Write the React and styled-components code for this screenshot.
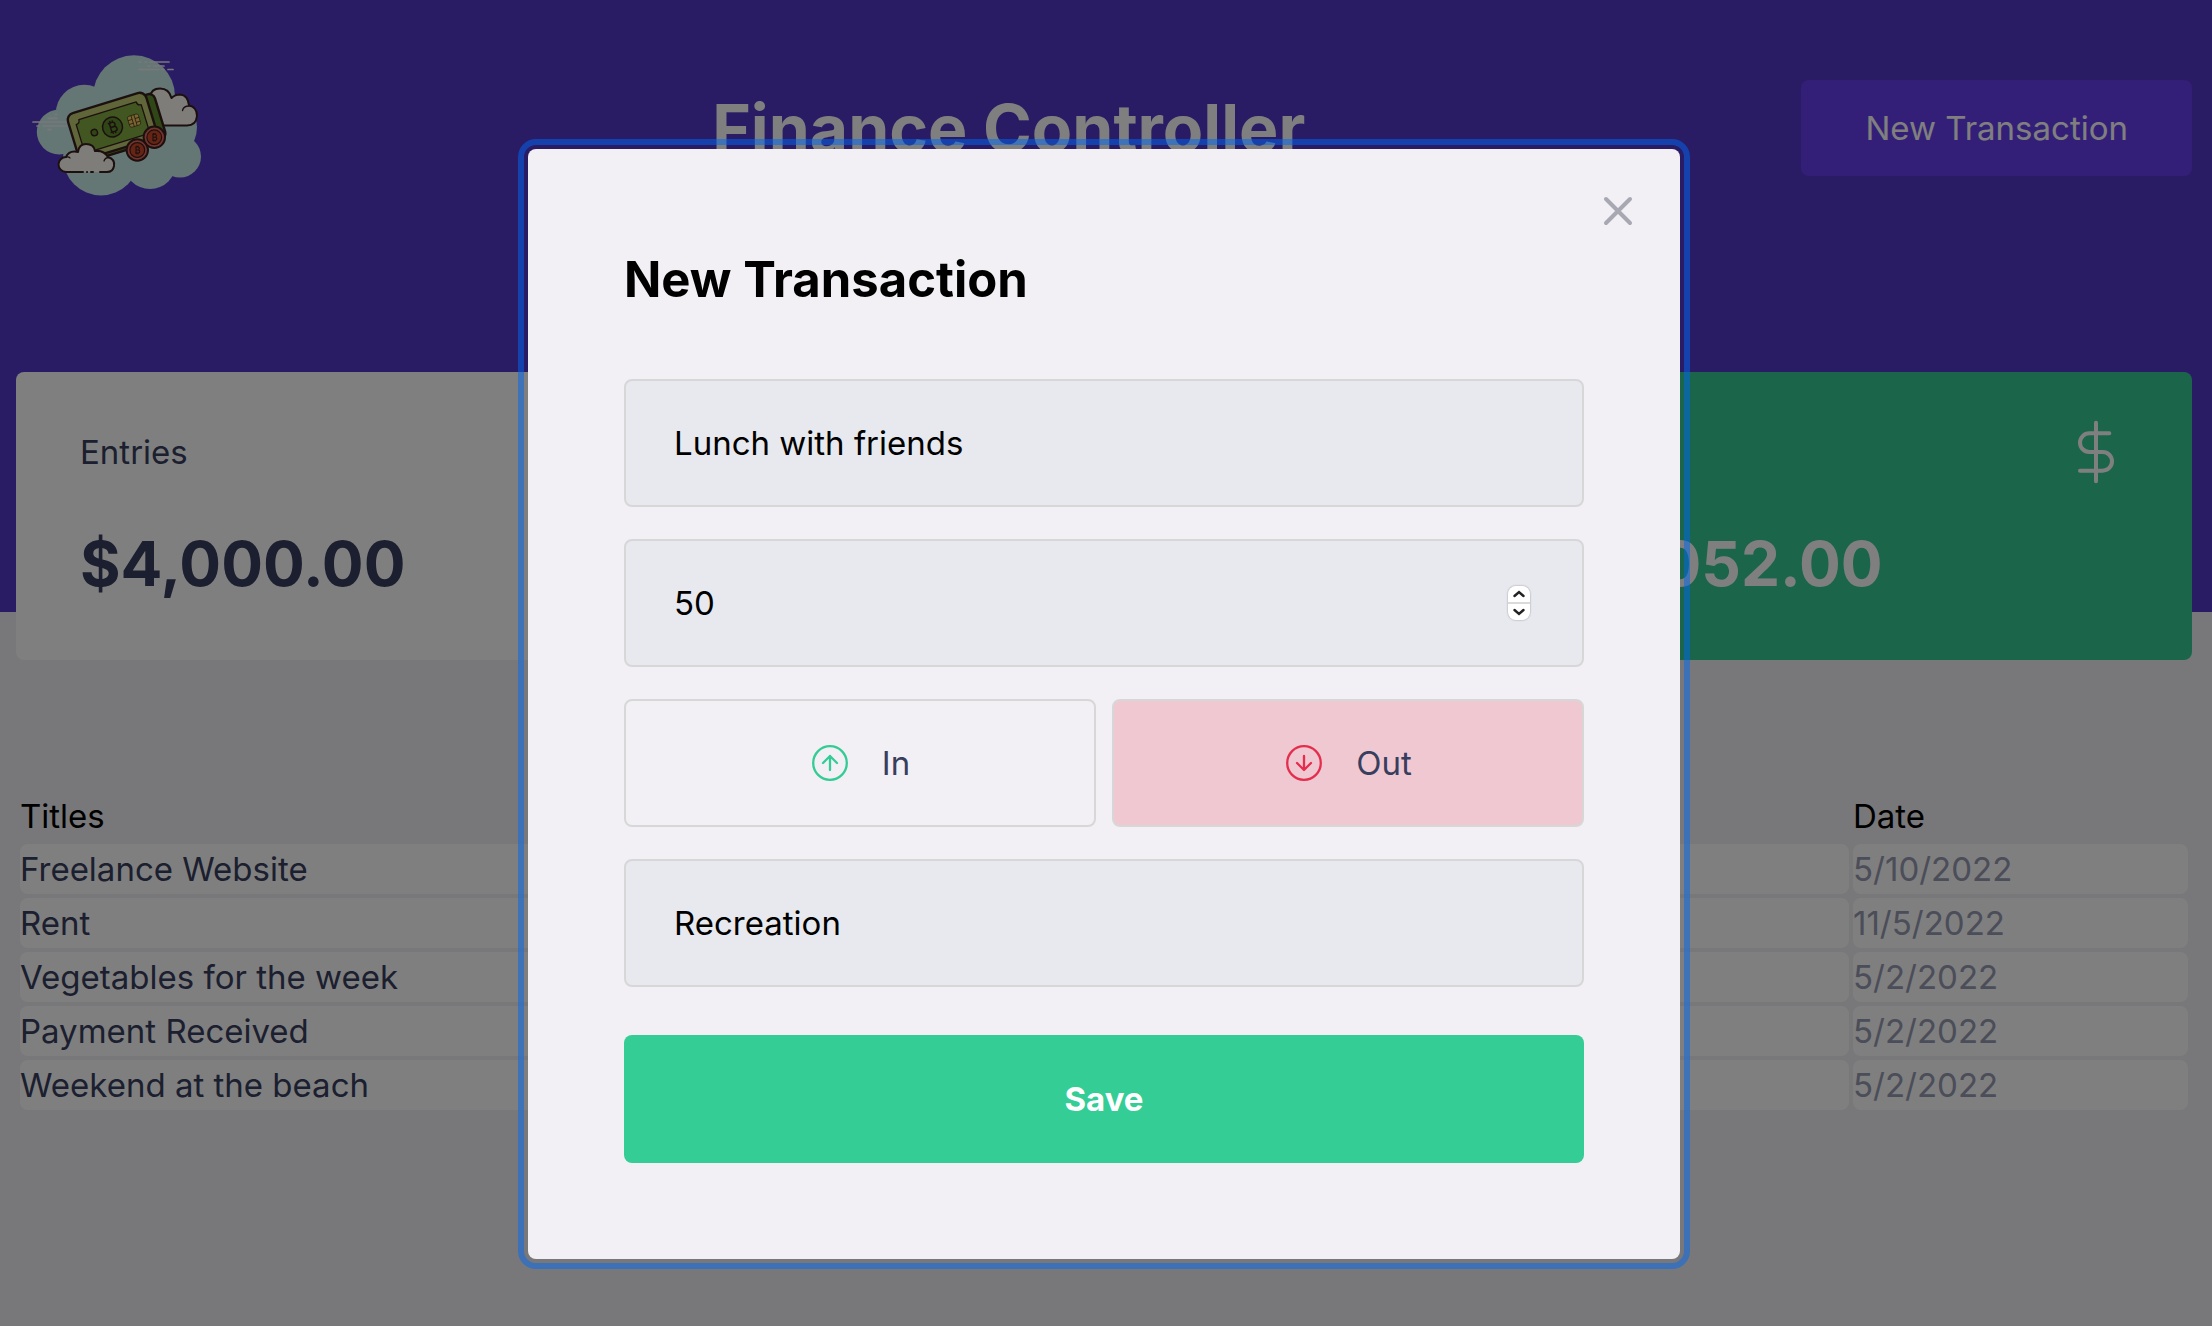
import React, { useState } from "react";
import styled, { createGlobalStyle } from "styled-components";

const GlobalStyle = createGlobalStyle`
  * { box-sizing: border-box; margin: 0; padding: 0; }
  body {
    background: #f1f1f4;
    min-height: 100vh;
    font-size: 33px;
    line-height: 48px;
    -webkit-font-smoothing: antialiased;
  }
  body, input, button { font-family: Inter, "Liberation Sans", sans-serif; }
  input, button { font-size: 33px; }
  button { cursor: pointer; }
`;

const Header = styled.header`
  background: #5537cb;
  display: flex;
  align-items: center;
  justify-content: space-between;
  padding: 28px 20px 384px 16px;
`;

const Logo = styled.svg`
  width: 200px;
  height: 200px;
`;

const PageTitle = styled.h1`
  color: #ffffff;
  font-size: 66px;
  font-weight: 700;
  line-height: 96px;
`;

const HeaderButton = styled.button`
  background: #683ef1;
  border: 0;
  border-radius: 8px;
  color: #ffffff;
  height: 96px;
  padding: 0 64px;
`;

const Main = styled.main`
  padding: 0 20px 0 16px;
`;

const Summary = styled.section`
  display: grid;
  grid-template-columns: repeat(3, 1fr);
  gap: 64px;
  margin-top: -240px;
`;

const Card = styled.article`
  background: ${(p) => (p.$highlight ? "#36cd96" : "#ffffff")};
  color: ${(p) => (p.$highlight ? "#ffffff" : "#383e5e")};
  border-radius: 8px;
  height: 288px;
  padding: 48px 64px;
`;

const CardHead = styled.header`
  display: flex;
  align-items: center;
  justify-content: space-between;
  height: 64px;
`;

const Amount = styled.strong`
  display: block;
  margin-top: 32px;
  font-size: 62px;
  font-weight: 700;
  line-height: 96px;
`;

const Transactions = styled.table`
  width: 100%;
  margin-top: 128px;
  table-layout: fixed;
  border-spacing: 4px;

  th {
    font-weight: 400;
    text-align: left;
  }
  th:last-child { width: 335px; }
  td {
    background: #ffffff;
    border-radius: 8px;
    color: #969bb2;
    padding: 1px 0;
  }
  td:first-child { color: #383e5e; }
`;

const Overlay = styled.div`
  position: fixed;
  inset: 0;
  background: rgba(0, 0, 0, 0.5);
  display: flex;
  align-items: center;
  justify-content: center;
  padding: 82px 4px 0 0;
`;

const Modal = styled.div`
  position: relative;
  width: 100%;
  max-width: 1152px;
  background: #f2f0f5;
  border-radius: 8px;
  padding: 96px;
  outline: 6px solid rgba(0, 103, 244, 0.5);
  outline-offset: 4px;
`;

const CloseButton = styled.button`
  position: absolute;
  top: 42px;
  right: 42px;
  width: 40px;
  height: 40px;
  background: none;
  border: 0;
  color: #a8a8b3;
`;

const Form = styled.form`
  display: flex;
  flex-direction: column;
  gap: 32px;
`;

const FormTitle = styled.h2`
  font-size: 49px;
  font-weight: 700;
  line-height: 70px;
  margin-bottom: 32px;
`;

const Field = styled.input`
  width: 100%;
  height: 128px;
  padding: 0 48px;
  border: 2px solid #d7d7d7;
  border-radius: 8px;
  background: #e7e9ee;
  color: #000000;
  outline: 0;
  appearance: textfield;

  &::-webkit-inner-spin-button { display: none; }
`;

const NumberBox = styled.div`
  position: relative;
`;

const Stepper = styled.div`
  position: absolute;
  top: 47px;
  right: 54px;
  width: 22px;
  height: 34px;
  display: flex;
  flex-direction: column;
  gap: 2px;
  border-radius: 8px;
  overflow: hidden;
  background: #dadada;
  box-shadow: 0 0 2px rgba(0, 0, 0, 0.4);
`;

const Step = styled.button`
  flex: 1;
  display: grid;
  place-items: center;
  background: #ffffff;
  border: 0;
  color: #222222;
`;

const TypeOptions = styled.div`
  display: grid;
  grid-template-columns: 1fr 1fr;
  gap: 16px;
`;

const TypeButton = styled.button`
  display: flex;
  align-items: center;
  justify-content: center;
  gap: 32px;
  height: 128px;
  border: 2px solid #d7d7d7;
  border-radius: 8px;
  background: ${(p) => (p.$active ? p.$tint : "transparent")};
  color: #383e5e;
`;

const SaveButton = styled.button`
  height: 128px;
  margin-top: 16px;
  border: 0;
  border-radius: 8px;
  background: #34cd95;
  color: #ffffff;
  font-weight: 700;
`;

const Outlined = ({ children }) => (
  <g fill="#fffaf2" stroke="#38201f" strokeWidth="2" strokeLinecap="round" strokeLinejoin="round">
    {children}
  </g>
);

const Coin = ({ x, y }) => (
  <g transform={`translate(${x} ${y})`} stroke="#38201f" fill="none">
    <circle r="10.7" fill="#e8685a" strokeWidth="2" />
    <circle r="7.4" fill="#cc4a28" strokeWidth="1.2" />
    <path d="M-2.2 -3H.6a1.5 1.5 0 0 1 0 3H-1.3M-1.3 0H1a1.5 1.5 0 0 1 0 3H-2.2M-1.3-3V3M-.6-4.2V-3M.9-4.2V-3M-.6 3V4.2M.9 3V4.2" strokeWidth="1.1" />
  </g>
);

const MoneyLogo = () => (
  <Logo viewBox="16 28 200 200" role="img" aria-label="Finance Controller">
    <g fill="#c8eee8">
      <circle cx="59.300" cy="132" r="22.500" />
      <circle cx="84.300" cy="113.300" r="28.500" />
      <circle cx="134" cy="96.300" r="41" />
      <circle cx="163" cy="127" r="34" />
      <circle cx="180" cy="156.500" r="21" />
      <circle cx="150" cy="163" r="26" />
      <circle cx="101" cy="157.500" r="38" />
      <path d="M84 110H165V165H84z" />
    </g>
    <g stroke="#f4eef6" strokeWidth="1.700" strokeLinecap="round">
      <path d="M139 62h2M145 62h1.500M150 62h19M148 66h2M154 66h10M139 69.500h20M162 69.500h2M168 69.500h5" />
      <path d="M55 114.500h2M48 118.300h9M33 122h34M37 126h2M43 126h23M48 129.600h3" />
    </g>
    <Outlined>
      <path stroke="none" d="M150 97Q151 88.500 160 88.500Q169 88.500 171.500 98Q175 94.500 180 94.500Q188 95 189 105.500Q197 107 197 116Q196 125.500 187 125.500H160z" />
      <path fill="none" d="M150 97Q151 88.500 160 88.500Q169 88.500 171.500 98Q175 94.500 180 94.500Q188 95 189 105.500Q197 107 197 116Q196 125.500 187 125.500H163" />
      <path d="M182.500 110.500Q183.500 106 189 106M156 105Q154 102 157 104" fill="none" strokeWidth="1.300" />
    </Outlined>
    <g transform="translate(112.500 127) rotate(-17)" stroke="#38201f" strokeLinejoin="round">
      <rect x="-30" y="-21" width="79" height="47" rx="6" fill="#5e8f2c" strokeWidth="2.400" />
      <rect x="-41" y="-25" width="82" height="48" rx="7" fill="#c0cc74" strokeWidth="2.400" />
      <path d="M-30 -17H30Q30 -13 34 -13V13Q30 13 30 17H-30Q-30 13 -34 13V-13Q-30 -13 -30 -17z" fill="#82ac42" strokeWidth="1.300" />
      <circle r="10" fill="#5f8c2c" strokeWidth="1.500" />
      <circle cx="-19" r="3.200" fill="#5f8c2c" strokeWidth="1.400" />
      <path d="M-3.500 -4.500H1a2.200 2.200 0 0 1 0 4.500H-2M-2 0H1.500a2.400 2.400 0 0 1 0 4.800H-3.500M-2-4.500V4.800M-1-6.500V-4.500M1.500-6.500V-4.500M-1 4.800V6.800M1.500 4.800V6.800" fill="none" strokeWidth="1.500" />
      <rect x="16.800" y="-5.500" width="11.400" height="11.400" rx="2" fill="#f2cc5c" strokeWidth="0.600" />
      <path d="M16.800 -1.500H21V-5.500M16.800 2.500H21V6M24 -5.500V-1.500H28.200M24 6V2.500H28.200M21 -1.500V2.500M24 -1.500V2.500" fill="none" strokeWidth="0.700" />
    </g>
    <Coin x={137.300} y={150} />
    <Coin x={154.300} y={137.300} />
    <Outlined>
      <path stroke="none" d="M66 172a7.500 7.500 0 0 1 0-15q3-7 12-5q1-8 8-8q8 0 9 7q9-1 13 6q7 2 6 9q-1 6-7 6z" />
      <path fill="none" d="M83 172H66a7.500 7.500 0 0 1 0-15q3-7 12-5q1-8 8-8q8 0 9 7q9-1 13 6q7 2 6 9q-1 6-7 6h-7M87 172h.1M91 172h2" />
      <path fill="none" strokeWidth="1.300" d="M104 161q1-3.500 5-3.500M66 157q3-.5 4 1" />
    </Outlined>
  </Logo>
);

const DollarIcon = () => (
  <svg width="64" height="64" viewBox="0 0 24 24" fill="none" stroke="currentColor" strokeWidth="1.500" strokeLinecap="round" strokeLinejoin="round" aria-hidden="true">
    <path d="M12 1V23M17 5H9.500a3.500 3.500 0 0 0 0 7h5a3.500 3.500 0 0 1 0 7H6" />
  </svg>
);

const ArrowCircle = ({ down, color }) => (
  <svg width="40" height="40" viewBox="0 0 40 40" fill="none" stroke={color} strokeWidth="2.300" strokeLinecap="round" strokeLinejoin="round" aria-hidden="true">
    <circle cx="20" cy="20" r="16.800" />
    <path d={down ? "M20 13V27M13 20L20 27L27 20" : "M20 27V13M13 20L20 13L27 20"} />
  </svg>
);

const Chevron = ({ down }) => (
  <svg width="12" height="8" viewBox="0 0 12 8" fill="none" stroke="currentColor" strokeWidth="2.400" strokeLinecap="round" aria-hidden="true">
    <path d={down ? "M1.500 2L6 6L10.500 2" : "M1.500 6L6 2L10.500 6"} />
  </svg>
);

const rows = [
  ["Freelance Website", "$2,500.00", "Work", "5/10/2022"],
  ["Rent", "-$2,000.00", "Home", "11/5/2022"],
  ["Vegetables for the week", "-$148.00", "Food", "5/2/2022"],
  ["Payment Received", "$1,500.00", "Work", "5/2/2022"],
  ["Weekend at the beach", "-$800.00", "Recreation", "5/2/2022"],
];

export default function App() {
  const [title, setTitle] = useState("Lunch with friends");
  const [amount, setAmount] = useState(50);
  const [category, setCategory] = useState("Recreation");
  const [type, setType] = useState("out");

  return (
    <>
      <GlobalStyle />
      <Header>
        <MoneyLogo />
        <PageTitle>Finance Controller</PageTitle>
        <HeaderButton type="button">New Transaction</HeaderButton>
      </Header>
      <Main>
        <Summary>
          <Card>
            <CardHead>Entries</CardHead>
            <Amount>$4,000.00</Amount>
          </Card>
          <Card>
            <CardHead>Withdraws</CardHead>
            <Amount>-$2,948.00</Amount>
          </Card>
          <Card $highlight>
            <CardHead>
              Total
              <DollarIcon />
            </CardHead>
            <Amount>$1,052.00</Amount>
          </Card>
        </Summary>
        <Transactions>
          <thead>
            <tr>
              <th>Titles</th>
              <th>Amount</th>
              <th>Category</th>
              <th>Date</th>
            </tr>
          </thead>
          <tbody>
            {rows.map((row) => (
              <tr key={row[0]}>
                {row.map((cell, i) => (
                  <td key={i}>{cell}</td>
                ))}
              </tr>
            ))}
          </tbody>
        </Transactions>
      </Main>

      <Overlay>
        <Modal role="dialog" aria-modal="true" aria-labelledby="modal-title">
          <CloseButton type="button" aria-label="Close">
            <svg width="40" height="40" viewBox="0 0 40 40" stroke="currentColor" strokeWidth="4" strokeLinecap="round" aria-hidden="true">
              <path d="M8 8L32 32M32 8L8 32" />
            </svg>
          </CloseButton>
          <Form onSubmit={(e) => e.preventDefault()}>
            <FormTitle id="modal-title">New Transaction</FormTitle>
            <Field aria-label="Title" value={title} onChange={(e) => setTitle(e.target.value)} />
            <NumberBox>
              <Field type="number" aria-label="Amount" value={amount} onChange={(e) => setAmount(Number(e.target.value))} />
              <Stepper>
                <Step type="button" aria-label="Increase" onClick={() => setAmount(amount + 1)}>
                  <Chevron />
                </Step>
                <Step type="button" aria-label="Decrease" onClick={() => setAmount(amount - 1)}>
                  <Chevron down />
                </Step>
              </Stepper>
            </NumberBox>
            <TypeOptions>
              <TypeButton type="button" $active={type === "in"} $tint="#c8eade" onClick={() => setType("in")}>
                <ArrowCircle color="#33cc95" />
                In
              </TypeButton>
              <TypeButton type="button" $active={type === "out"} $tint="#f0c8d1" onClick={() => setType("out")}>
                <ArrowCircle down color="#e52e4d" />
                Out
              </TypeButton>
            </TypeOptions>
            <Field aria-label="Category" value={category} onChange={(e) => setCategory(e.target.value)} />
            <SaveButton type="submit">Save</SaveButton>
          </Form>
        </Modal>
      </Overlay>
    </>
  );
}
